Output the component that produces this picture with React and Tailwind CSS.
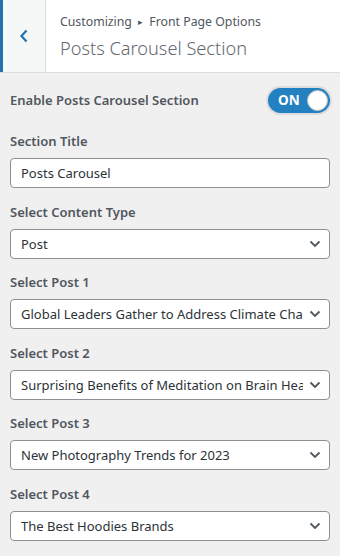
import React from "react";

function Chevron() {
  return (
    <svg width="12" height="8" viewBox="0 0 12 8" className="shrink-0">
      <path d="M1.5 1.5 L6 6 L10.5 1.5" fill="none" stroke="#50575e" strokeWidth="1.8" />
    </svg>
  );
}

function SelectBox({ value }) {
  return (
    <div className="flex h-[30px] items-center rounded-[4px] border border-[#8c8f94] bg-white pl-[10px] pr-[8px]">
      <span className="flex-1 overflow-hidden whitespace-nowrap text-[13px] leading-[20px] text-[#2c3338]">{value}</span>
      <div className="ml-[6px] flex w-[12px] justify-center"><Chevron /></div>
    </div>
  );
}

function Field({ label, children }) {
  return (
    <div className="flex flex-col">
      <div className="mb-[7px] h-[20px] text-[13px] font-semibold leading-[20px] text-[#50575e]">{label}</div>
      {children}
    </div>
  );
}

export default function App() {
  const posts = [
    ["Select Post 1", "Global Leaders Gather to Address Climate Change"],
    ["Select Post 2", "Surprising Benefits of Meditation on Brain Health"],
    ["Select Post 3", "New Photography Trends for 2023"],
    ["Select Post 4", "The Best Hoodies Brands"],
  ];
  return (
    <div className="h-[556px] w-[340px] overflow-hidden bg-[#f0f0f1]" style={{ fontFamily: '"Noto Sans", sans-serif' }}>
      <div className="flex h-[73px] border-b border-[#dcdcde] bg-white">
        <div className="flex w-[46px] items-center justify-center border-l-[3px] border-r border-[#dcdcde] border-l-[#2271b1] bg-[#f6f7f7]">
          <svg width="10" height="14" viewBox="0 0 10 14">
            <path d="M7.5 1.5 L2.5 7 L7.5 12.5" fill="none" stroke="#2271b1" strokeWidth="2.2" />
          </svg>
        </div>
        <div className="flex flex-col justify-center pl-[14px] pt-[2px]">
          <div className="text-[12.3px] leading-[18px] text-[#50575e]">
            Customizing <span className="mx-[3px] align-middle text-[9px]">▸</span> Front Page Options
          </div>
          <div className="mt-[4px] text-[18.2px] font-light leading-[26px] text-[#646970]">Posts Carousel Section</div>
        </div>
      </div>
      <div className="flex flex-col px-[10px] pt-[14px]">
        <div className="mb-[18px] flex h-[26px] items-center justify-between">
          <span className="text-[13px] font-semibold leading-[20px] text-[#50575e]">Enable Posts Carousel Section</span>
          <div className="flex h-[25px] w-[62px] items-center justify-between rounded-full bg-[#2481c1] pl-[10px] pr-[2px] ring-2 ring-[#dcdcde]">
            <span className="text-[13.5px] font-bold leading-[20px] text-white">ON</span>
            <span className="h-[21px] w-[21px] rounded-full border border-[#c3c4c7] bg-white" />
          </div>
        </div>
        <div className="flex flex-col gap-[13.5px]">
          <Field label="Section Title">
            <div className="flex h-[30px] items-center rounded-[4px] border border-[#8c8f94] bg-white px-[10px] text-[13px] leading-[20px] text-[#2c3338]">Posts Carousel</div>
          </Field>
          <Field label="Select Content Type">
            <SelectBox value="Post" />
          </Field>
          {posts.map(([l, v]) => (
            <Field key={l} label={l}>
              <SelectBox value={v} />
            </Field>
          ))}
        </div>
      </div>
    </div>
  );
}
